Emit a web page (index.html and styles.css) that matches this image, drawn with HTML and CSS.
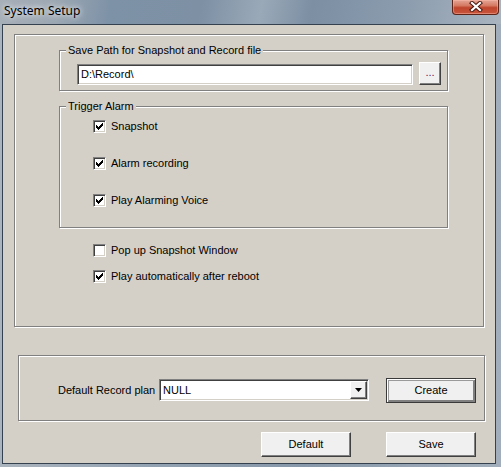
FILE: index.html
```html
<!DOCTYPE html>
<html>
<head>
<meta charset="utf-8">
<link rel="stylesheet" href="styles.css">
</head>
<body>
<div class="window">
  <div class="titlebar">
    <span class="title">System Setup</span>
    <div class="close">
      <svg width="14" height="11" viewBox="0 0 14 11">
        <path d="M3 2 L11 9 M11 2 L3 9" stroke="#4a1a12" stroke-width="4.2" stroke-linecap="square" fill="none"/>
        <path d="M3 2 L11 9 M11 2 L3 9" stroke="#ffffff" stroke-width="2.2" stroke-linecap="square" fill="none"/>
      </svg>
    </div>
  </div>
  <div class="client">
    <div class="group outer">
      <div class="group fs fs-path">
        <span class="caption">Save Path for Snapshot and Record file</span>
        <div class="path-row">
          <div class="edit path-edit">D:\Record\</div>
          <div class="btn browse">...</div>
        </div>
      </div>
      <div class="group fs fs-trigger">
        <span class="caption">Trigger Alarm</span>
        <div class="checks">
          <div class="check"><span class="cb"><svg class="mark" width="9" height="9" viewBox="0 0 9 9"><path d="M1 3H2V4H3V5H4V4H5V3H6V2H7V1H8V4H7V5H6V6H5V7H4V8H3V7H2V6H1Z"/></svg></span><span>Snapshot</span></div>
          <div class="check"><span class="cb"><svg class="mark" width="9" height="9" viewBox="0 0 9 9"><path d="M1 3H2V4H3V5H4V4H5V3H6V2H7V1H8V4H7V5H6V6H5V7H4V8H3V7H2V6H1Z"/></svg></span><span>Alarm recording</span></div>
          <div class="check"><span class="cb"><svg class="mark" width="9" height="9" viewBox="0 0 9 9"><path d="M1 3H2V4H3V5H4V4H5V3H6V2H7V1H8V4H7V5H6V6H5V7H4V8H3V7H2V6H1Z"/></svg></span><span>Play Alarming Voice</span></div>
        </div>
      </div>
      <div class="extra">
        <div class="check"><span class="cb"></span><span>Pop up Snapshot Window</span></div>
        <div class="check"><span class="cb"><svg class="mark" width="9" height="9" viewBox="0 0 9 9"><path d="M1 3H2V4H3V5H4V4H5V3H6V2H7V1H8V4H7V5H6V6H5V7H4V8H3V7H2V6H1Z"/></svg></span><span>Play automatically after reboot</span></div>
      </div>
    </div>
    <div class="group lower">
      <div class="plan-row">
        <span class="plan-label">Default Record plan</span>
        <div class="edit combo">
          <span class="combo-text">NULL</span>
          <div class="btn drop">
            <svg width="7" height="4" viewBox="0 0 7 4"><path d="M0 0H7L3.5 4Z" fill="#000"/></svg>
          </div>
        </div>
        <div class="btn push default-btn create">Create</div>
      </div>
    </div>
    <div class="actions">
      <div class="btn push">Default</div>
      <div class="btn push">Save</div>
    </div>
  </div>
</div>
</body>
</html>
```
FILE: styles.css
```css
html, body {
  margin: 0;
  padding: 0;
}
body {
  width: 501px;
  height: 467px;
  overflow: hidden;
}
.window {
  width: 501px;
  height: 467px;
  display: flex;
  flex-direction: column;
  background: linear-gradient(90deg, #aab4be 0%, #93a2b2 30%, #8798aa 60%, #a2aebb 100%);
  font-family: "Liberation Sans", Arial, sans-serif;
  font-size: 11px;
  color: #000;
}
.titlebar {
  height: 24px;
  display: flex;
  align-items: flex-start;
  background: linear-gradient(100deg, #a7afb8 0%, #9aa6b2 12%, #7e92a7 22%, #7d90a4 40%, #9aa9b8 52%, #7c8fa3 62%, #8b9cae 80%, #a9b4bf 100%);
}
.title {
  font-family: "Noto Sans", "Open Sans", sans-serif;
  font-size: 12px;
  line-height: 17px;
  margin: 2px 0 0 4px;
  text-shadow: 0 0 5px rgba(255,255,255,0.9), 0 0 10px rgba(255,255,255,0.7);
}
.close {
  margin-left: auto;
  margin-right: 2px;
  width: 47px;
  height: 15px;
  box-sizing: border-box;
  border: 1px solid #5e2418;
  border-top: none;
  border-radius: 0 0 4px 4px;
  background: linear-gradient(#e4a595 0%, #d57a63 40%, #bf452d 55%, #c8563c 100%);
  box-shadow: inset 0 0 0 1px rgba(255, 190, 175, 0.45);
  display: flex;
  align-items: center;
  justify-content: center;
}
.close svg {
  display: block;
  margin-top: -2px;
}
.client {
  margin: 0 5px 0 2px;
  height: 440px;
  box-sizing: border-box;
  border: 1px solid #35414e;
  background: #d4d0c8;
  display: flex;
  flex-direction: column;
}
.group {
  box-sizing: border-box;
  border: 1px solid #808080;
  box-shadow: inset 1px 1px 0 #fff, 1px 1px 0 #fff;
  display: flex;
  flex-direction: column;
}
.outer {
  margin: 9px 0 0 11px;
  width: 470px;
  height: 293px;
}
.fs {
  margin-left: 44px;
  width: 389px;
}
.fs-path {
  margin-top: 15px;
  height: 41px;
}
.fs-trigger {
  margin-top: 15px;
  height: 122px;
}
.caption {
  align-self: flex-start;
  margin: -7px 0 0 6px;
  padding: 0 2px;
  line-height: 13px;
  height: 13px;
  background: #d4d0c8;
  white-space: nowrap;
}
.path-row {
  display: flex;
  align-items: flex-start;
  margin: 5px 0 0 17px;
}
.edit {
  box-sizing: border-box;
  background: #fff;
  border-top: 1px solid #808080;
  border-left: 1px solid #808080;
  border-bottom: 1px solid #fff;
  border-right: 1px solid #fff;
  box-shadow: inset 1px 1px 0 #404040, inset -1px -1px 0 #d4d0c8;
}
.path-edit {
  width: 336px;
  height: 21px;
  margin-top: 2px;
  padding: 0 0 0 3px;
  line-height: 19px;
}
.btn {
  box-sizing: border-box;
  background: #f0f0f0;
  border-top: 1px solid #fff;
  border-left: 1px solid #fff;
  border-bottom: 1px solid #404040;
  border-right: 1px solid #404040;
  box-shadow: inset -1px -1px 0 #808080;
  display: flex;
  align-items: center;
  justify-content: center;
}
.browse {
  width: 22px;
  height: 23px;
  margin-left: 6px;
  color: #602060;
  line-height: 13px;
  padding-bottom: 3px;
}
.checks {
  display: flex;
  flex-direction: column;
  gap: 24px;
  margin: 7px 0 0 33px;
}
.check {
  display: flex;
  align-items: center;
  height: 13px;
  line-height: 13px;
  white-space: nowrap;
}
.cb {
  width: 13px;
  height: 13px;
  flex: none;
  box-sizing: border-box;
  background: #fff;
  border-top: 1px solid #808080;
  border-left: 1px solid #808080;
  border-bottom: 1px solid #fff;
  border-right: 1px solid #fff;
  box-shadow: inset 1px 1px 0 #404040, inset -1px -1px 0 #d4d0c8;
  margin-right: 5px;
}
.mark {
  display: block;
  margin: 1px;
  fill: #000;
  shape-rendering: crispEdges;
}
.extra {
  display: flex;
  flex-direction: column;
  gap: 13px;
  margin: 16px 0 0 78px;
}
.lower {
  margin: 28px 0 0 15px;
  width: 467px;
  height: 66px;
}
.plan-row {
  display: flex;
  align-items: flex-start;
  margin: 22px 0 0 39px;
}
.plan-label {
  width: 101px;
  line-height: 25px;
  white-space: nowrap;
}
.combo {
  width: 210px;
  height: 22px;
  margin-top: 1px;
  padding: 1px;
  display: flex;
  align-items: center;
}
.combo-text {
  flex: 1;
  padding-left: 2px;
  line-height: 18px;
}
.drop {
  width: 17px;
  height: 18px;
}
.drop svg {
  display: block;
}
.push {
  width: 90px;
  height: 25px;
  line-height: 13px;
}
.create {
  margin-left: 17px;
}
.default-btn {
  border: 1px solid #3a3a3a;
  box-shadow: inset 1px 1px 0 #fff, inset -1px -1px 0 #808080, inset 2px 2px 0 #9a9a9a, inset -2px -2px 0 #808080;
}
.actions {
  display: flex;
  justify-content: flex-end;
  gap: 35px;
  margin: 11px 19px 0 0;
}
```
